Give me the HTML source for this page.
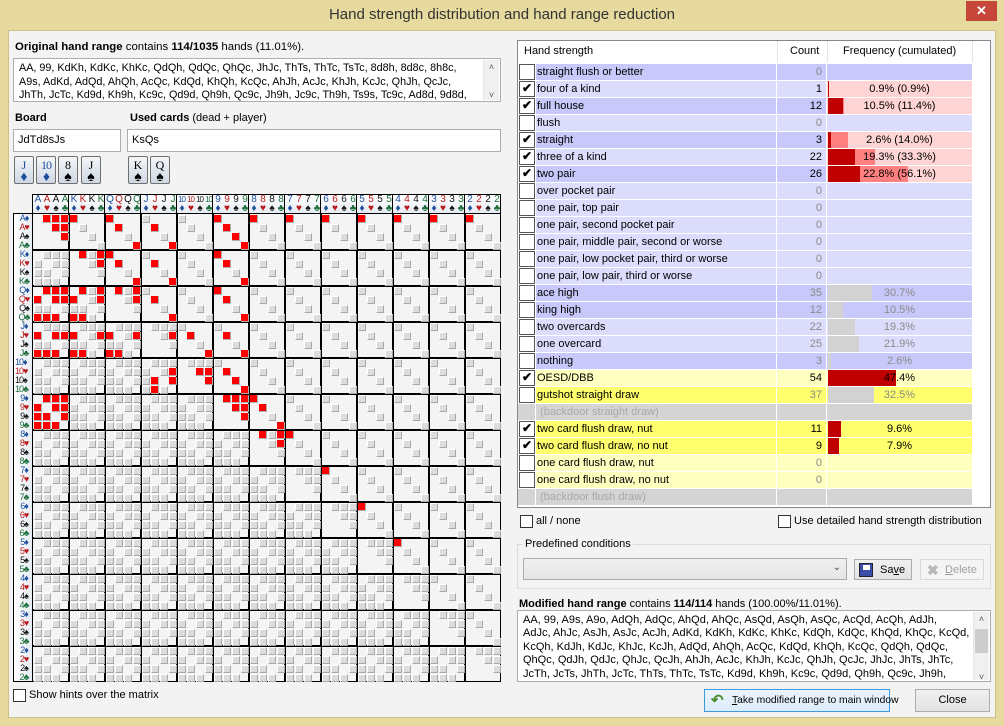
<!DOCTYPE html>
<html><head><meta charset="utf-8">
<style>
*{box-sizing:border-box;margin:0;padding:0}
body{width:1004px;height:726px;overflow:hidden;background:#e6da9e;font-family:"Liberation Sans",sans-serif;font-size:11px;color:#000;position:relative}
.a{position:absolute}
#win{left:8px;top:30px;width:988px;height:688px;background:#f3f3f3;border:1px solid #cdc18a}
.title{left:0;top:0;width:1004px;height:30px;text-align:center;line-height:30px;font-size:15px;color:#333}
.close{left:966px;top:1px;width:31px;height:20px;background:#c7463a;color:#fff;text-align:center;font-size:13px;line-height:20px;font-weight:bold}
.ta{background:#fff;border:1px solid #abadb3;line-height:13.5px;padding:3px 5px;overflow:hidden;white-space:nowrap}
.sb{background:#f0f0f0;border-left:1px solid #e6e6e6;width:16px;top:1px;bottom:1px;right:1px}
.inp{background:#fff;border:1px solid #abadb3;line-height:20px;padding-left:4px}
.card{width:20px;height:28px;border:1px solid #707070;border-radius:2px;background:linear-gradient(#f4f6f9,#cfd8e3);text-align:center;font-family:"Liberation Serif",serif;font-size:12px;line-height:12px;padding-top:2px}
.card span{display:block;font-size:14px;line-height:13px}
.cb{width:13px;height:13px;border:1px solid #333;background:#fff}
.btn{border:1px solid #acacac;background:linear-gradient(#f0f0f0,#e3e3e3);text-align:center;line-height:20px;white-space:nowrap}
.tr{left:518px;width:454px;height:16px;line-height:16px}
.tr div{position:absolute;top:0;height:16px}
</style></head><body>
<div class="a title">Hand strength distribution and hand range reduction</div>
<div class="a close">✕</div>
<div class="a" id="win"></div>

<div class="a" style="left:15px;top:41px;font-size:11.4px"><b>Original hand range</b> contains <b>114/1035</b> hands (11.01%).</div>
<div class="a ta" style="left:13px;top:58px;width:488px;height:44px;font-size:10.8px">AA, 99, KdKh, KdKc, KhKc, QdQh, QdQc, QhQc, JhJc, ThTs, ThTc, TsTc, 8d8h, 8d8c, 8h8c,<br>A9s, AdKd, AdQd, AhQh, AcQc, KdQd, KhQh, KcQc, AhJh, AcJc, KhJh, KcJc, QhJh, QcJc,<br>JhTh, JcTc, Kd9d, Kh9h, Kc9c, Qd9d, Qh9h, Qc9c, Jh9h, Jc9c, Th9h, Ts9s, Tc9c, Ad8d, 9d8d,
<div class="a sb" style="font-size:9px;color:#555;text-align:center;line-height:14px">˄<br><br>˅</div></div>
<div class="a" style="left:15px;top:112px;font-weight:bold">Board</div>
<div class="a" style="left:130px;top:112px"><b>Used cards</b> (dead + player)</div>
<div class="a inp" style="left:13px;top:129px;width:108px;height:23px">JdTd8sJs</div>
<div class="a inp" style="left:127px;top:129px;width:374px;height:23px">KsQs</div>
<div class="a card" style="left:14px;top:156px;color:#1d4f9c">J<span>♦</span></div>
<div class="a card" style="left:36px;top:156px;color:#1d4f9c;letter-spacing:-1px">10<span>♦</span></div>
<div class="a card" style="left:58px;top:156px">8<span>♠</span></div>
<div class="a card" style="left:81px;top:156px">J<span>♠</span></div>
<div class="a card" style="left:128px;top:156px">K<span>♠</span></div>
<div class="a card" style="left:150px;top:156px">Q<span>♠</span></div>

<div id="mx"></div>

<div class="a cb" style="left:13px;top:689px"></div>
<div class="a" style="left:29px;top:689px">Show hints over the matrix</div>

<div class="a" style="left:517px;top:40px;width:474px;height:468px;border:1px solid #828790;background:#fff"></div>
<div class="a" style="left:524px;top:45px">Hand strength</div>
<div class="a" style="left:790px;top:45px">Count</div>
<div class="a" style="left:843px;top:45px">Frequency (cumulated)</div>
<div class="a" style="left:777px;top:41px;width:1px;height:21px;background:#e5e5e5"></div>
<div class="a" style="left:827px;top:41px;width:1px;height:21px;background:#e5e5e5"></div>
<div class="a" style="left:972px;top:41px;width:1px;height:21px;background:#e5e5e5"></div>
<div id="tbl"></div>

<div class="a cb" style="left:520px;top:515px"></div>
<div class="a" style="left:536px;top:515px">all / none</div>
<div class="a cb" style="left:778px;top:515px"></div>
<div class="a" style="left:794px;top:515px">Use detailed hand strength distribution</div>
<div class="a" style="left:517px;top:544px;width:474px;height:45px;border:1px solid #dcdcdc"></div>
<div class="a" style="left:523px;top:538px;background:#f3f3f3;padding:0 2px">Predefined conditions</div>
<div class="a" style="left:523px;top:558px;width:324px;height:22px;border:1px solid #acacac;background:linear-gradient(#f0f0f0,#e5e5e5)"><span class="a" style="right:5px;top:3px;font-size:10px;color:#444">⌄</span></div>
<div class="a btn" style="left:854px;top:559px;width:58px;height:21px;text-align:left;padding-left:25px">Sa<u>v</u>e<div class="a" style="left:4px;top:3px;width:14px;height:14px;background:#3a4fa8;border:1px solid #223"><div class="a" style="left:3px;top:1px;width:7px;height:5px;background:#fff"></div></div></div>
<div class="a btn" style="left:920px;top:559px;width:64px;height:21px;color:#a0a0a0;text-align:left;padding-left:24px;background:#f4f4f4;border-color:#d8d8d8"><u>D</u>elete<span class="a" style="left:6px;top:0;font-size:14px;color:#b8b8b8;font-weight:bold">✖</span></div>

<div class="a" style="left:519px;top:598px"><b>Modified hand range</b> contains <b>114/114</b> hands (100.00%/11.01%).</div>
<div class="a ta" style="left:517px;top:610px;width:474px;height:72px;line-height:13.4px;font-size:11px">AA, 99, A9s, A9o, AdQh, AdQc, AhQd, AhQc, AsQd, AsQh, AsQc, AcQd, AcQh, AdJh,<br>AdJc, AhJc, AsJh, AsJc, AcJh, AdKd, KdKh, KdKc, KhKc, KdQh, KdQc, KhQd, KhQc, KcQd,<br>KcQh, KdJh, KdJc, KhJc, KcJh, AdQd, AhQh, AcQc, KdQd, KhQh, KcQc, QdQh, QdQc,<br>QhQc, QdJh, QdJc, QhJc, QcJh, AhJh, AcJc, KhJh, KcJc, QhJh, QcJc, JhJc, JhTs, JhTc,<br>JcTh, JcTs, JhTh, JcTc, ThTs, ThTc, TsTc, Kd9d, Kh9h, Kc9c, Qd9d, Qh9h, Qc9c, Jh9h,
<div class="a sb" style="font-size:9px;color:#555;text-align:center;line-height:14px">˄<div style="background:#cdcdcd;height:24px;margin:3px 1px"></div><br>˅</div></div>
<div class="a btn" style="left:704px;top:689px;width:186px;height:23px;border-color:#3c9be0;background:linear-gradient(#ecf4fc,#dcecfc);text-align:left;padding-left:27px;line-height:21px;font-size:10.3px"><u>T</u>ake modified range to main window<span class="a" style="left:6px;top:0;color:#4a8a2a;font-size:15px;font-weight:bold">↶</span></div>
<div class="a btn" style="left:915px;top:689px;width:75px;height:23px;line-height:21px">Close</div>

<script>
(function(){
var R="AKQJT98765432",S="dhsc",SY=["♦","♥","♠","♣"],SC=["#1d4f9c","#b81c1c","#111","#1d6e3a"];
var range="AA, 99, A9s, A9o, AdQh, AdQc, AhQd, AhQc, AsQd, AsQh, AsQc, AcQd, AcQh, AdJh, AdJc, AhJc, AsJh, AsJc, AcJh, AdKd, KdKh, KdKc, KhKc, KdQh, KdQc, KhQd, KhQc, KcQd, KcQh, KdJh, KdJc, KhJc, KcJh, AdQd, AhQh, AcQc, KdQd, KhQh, KcQc, QdQh, QdQc, QhQc, QdJh, QdJc, QhJc, QcJh, AhJh, AcJc, KhJh, KcJc, QhJh, QcJc, JhJc, JhTs, JhTc, JcTh, JcTs, JhTh, JcTc, ThTs, ThTc, TsTc, Kd9d, Kh9h, Kc9c, Qd9d, Qh9h, Qc9c, Jh9h, Jc9c, Th9h, Ts9s, Tc9c, Ad8d, 9d8d, 9h8h, 9c8c, 8d8h, 8d8c, 8h8c, Ad7d, Ad6d, Ad5d, Ad4d, Ad3d, Ad2d, 8d7d, 7d6d, 6d5d, 5d4d".split(", ");
var set={};
function ci(r,s){return R.indexOf(r)*4+s}
function add(a,b){var x=Math.min(a,b),y=Math.max(a,b);set[x+"-"+y]=1}
range.forEach(function(t){
 if(t.length==4){add(ci(t[0],S.indexOf(t[1])),ci(t[2],S.indexOf(t[3])));return}
 var a=t[0],b=t[1],k=t[2]||"";
 for(var i=0;i<4;i++)for(var j=0;j<4;j++){
  if(a==b){if(i<j)add(ci(a,i),ci(b,j))}
  else if(k=="s"){if(i==j)add(ci(a,i),ci(b,j))}
  else if(k=="o"){if(i!=j)add(ci(a,i),ci(b,j))}
 }
});
var h=[];
var X0=32,Y0=213,B=36;
h.push('<div class="a" style="left:32px;top:194px;width:469px;height:19px;background:linear-gradient(#fff,#e6ebf2);border:1px solid #000;border-bottom:none"></div>');
h.push('<div class="a" style="left:13px;top:213px;width:20px;height:469px;background:linear-gradient(90deg,#fff,#e6ebf2);border:1px solid #000"></div>');
for(var r=0;r<13;r++){
 var lab=R[r]=="T"?"10":R[r];
 for(var s=0;s<4;s++){
  var x=X0+r*B+1+s*9;
  h.push('<div class="a" style="left:'+(x-1)+'px;top:195px;width:11px;text-align:center;font-size:'+(lab=="10"?8:10)+'px;line-height:9px;color:'+SC[s]+';letter-spacing:-1px">'+lab+'<br><span style="font-size:10px">'+SY[s]+'</span></div>');
  var y=Y0+r*B+1+s*9;
  h.push('<div class="a" style="left:15px;top:'+(y-1)+'px;width:18px;font-size:9px;line-height:10px;color:'+SC[s]+';letter-spacing:-1px;text-align:'+(lab=="10"?"left":"center")+'">'+lab+SY[s]+'</div>');
 }
 if(r>0){
  h.push('<div class="a" style="left:'+(X0+r*B)+'px;top:194px;width:1px;height:19px;background:#000"></div>');
 }
}
h.push('<div class="a" style="left:32px;top:213px;width:469px;height:469px;background:#f4f4f4;border:1px solid #000"></div>');
for(var r=1;r<13;r++){
 h.push('<div class="a" style="left:'+(X0+r*B)+'px;top:213px;width:2px;height:469px;background:#000"></div>');
 h.push('<div class="a" style="left:32px;top:'+(Y0+r*B)+'px;width:469px;height:2px;background:#000"></div>');
}
for(var rr=0;rr<13;rr++)for(var rs=0;rs<4;rs++)for(var cr=0;cr<13;cr++)for(var cs=0;cs<4;cs++){
 var v=false;
 if(rr<cr)v=(rs==cs);else if(rr>cr)v=(rs!=cs);else v=(rs<cs);
 if(!v)continue;
 var a=rr*4+rs,b=cr*4+cs,key=Math.min(a,b)+"-"+Math.max(a,b);
 var x=X0+cr*B+2+cs*9,y=Y0+rr*B+2+rs*9;
 if(set[key])h.push('<div class="a" style="left:'+x+'px;top:'+y+'px;width:8px;height:8px;background:#f00;border-right:1px solid #b0b0b0;border-bottom:1px solid #b0b0b0"></div>');
 else h.push('<div class="a" style="left:'+x+'px;top:'+y+'px;width:8px;height:8px;background:#dcdcdc;border-top:1px solid #fff;border-left:1px solid #fff;border-right:1px solid #a8a8a8;border-bottom:1px solid #a8a8a8"></div>');
}
document.getElementById("mx").innerHTML=h.join("");

var D="#c8c8fa",L="#dcdcfc",PK="#ffd4d4",YL="#ffffc0",YB="#ffff6e",GR="#d4d4d4";
var rows=[
["straight flush or better",0,"0","",0,0,D,D],
["four of a kind",1,"1","0.9% (0.9%)",1,1,L,PK],
["full house",1,"12","10.5% (11.4%)",15,16,D,PK],
["flush",0,"0","",0,0,L,L],
["straight",1,"3","2.6% (14.0%)",3,20,D,PK],
["three of a kind",1,"22","19.3% (33.3%)",27,47,L,PK],
["two pair",1,"26","22.8% (56.1%)",32,80,D,PK],
["over pocket pair",0,"0","",0,0,L,L],
["one pair, top pair",0,"0","",0,0,L,L],
["one pair, second pocket pair",0,"0","",0,0,L,L],
["one pair, middle pair, second or worse",0,"0","",0,0,L,L],
["one pair, low pocket pair, third or worse",0,"0","",0,0,L,L],
["one pair, low pair, third or worse",0,"0","",0,0,L,L],
["ace high",0,"35","30.7%",44,0,D,D],
["king high",0,"12","10.5%",15,0,D,D],
["two overcards",0,"22","19.3%",27,0,L,L],
["one overcard",0,"25","21.9%",31,0,L,L],
["nothing",0,"3","2.6%",3,0,D,D],
["OESD/DBB",1,"54","47.4%",68,0,YL,YL],
["gutshot straight draw",0,"37","32.5%",46,0,YB,YB],
["(backdoor straight draw)",2,"","",0,0,GR,GR],
["two card flush draw, nut",1,"11","9.6%",13,0,YB,YB],
["two card flush draw, no nut",1,"9","7.9%",11,0,YB,YB],
["one card flush draw, nut",0,"0","",0,0,YL,YL],
["one card flush draw, no nut",0,"0","",0,0,YL,YL],
["(backdoor flush draw)",2,"","",0,0,GR,GR]];
var t=[];
rows.forEach(function(o,i){
 var y=64+i*17,chk=o[1]==1,bd=o[1]==2;
 var tc=bd?"#a8a8a8":"#000",cc=chk?"#000":"#8a8a8a";
 t.push('<div class="a tr" style="top:'+y+'px">');
 if(!bd)t.push('<div style="left:1px;width:16px;background:#fff;border:1px solid #555"></div>'+(chk?'<div style="left:4px;top:-1px;font-size:12px;font-weight:bold">✔</div>':''));
 else t.push('<div style="left:0;width:17px;background:'+GR+'"></div>');
 t.push('<div style="left:18px;width:240px;background:'+o[6]+';padding-left:1px;color:'+tc+'">'+(bd?'&nbsp;':'')+o[0]+'</div>');
 t.push('<div style="left:259px;width:49px;background:'+o[6]+';text-align:right;padding-right:4px;color:'+(bd?tc:cc)+'">'+o[2]+'</div>');
 t.push('<div style="left:309px;width:145px;background:'+o[7]+'"></div>');
 if(o[5])t.push('<div style="left:310px;width:'+o[5]+'px;background:#ff8080"></div>');
 if(o[4])t.push('<div style="left:310px;width:'+o[4]+'px;background:'+(chk?'#c00000':'#d2d2d2')+'"></div>');
 t.push('<div style="left:309px;width:145px;text-align:center;color:'+cc+'">'+o[3]+'</div>');
 t.push('</div>');
});
document.getElementById("tbl").innerHTML=t.join("");
})();
</script>
</body></html>
